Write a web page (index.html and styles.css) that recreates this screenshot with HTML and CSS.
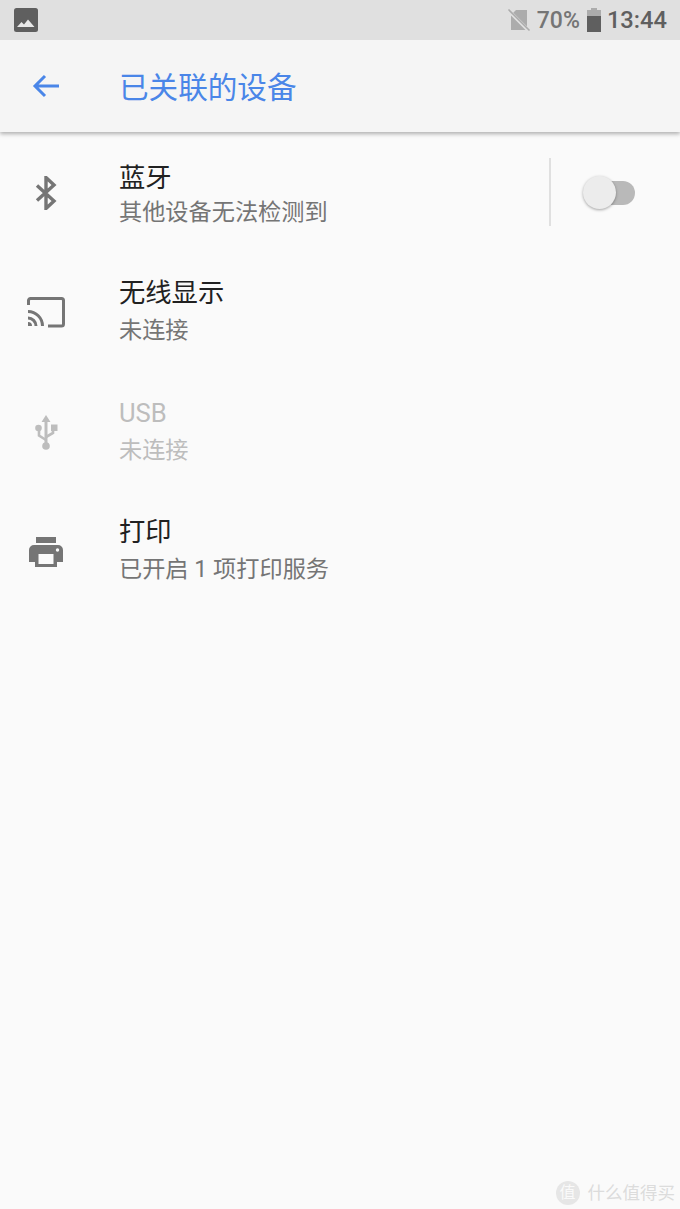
FILE: index.html
```html
<!DOCTYPE html>
<html lang="zh-CN">
<head>
<meta charset="utf-8">
<title>已关联的设备</title>
<link rel="stylesheet" href="styles.css">
</head>
<body>
<div class="screen">
  <header class="status">
    <svg class="pic" width="26" height="26" viewBox="0 0 26 26"><rect x="1" y="1" width="24" height="24" rx="2.5" fill="#5f5f5f"/><path d="M4 20l4.500-5 2.500 2.500 4-5 6.500 7.500z" fill="#e8e8e8"/></svg>
    <div class="status-right">
      <svg class="nosim" width="24" height="26" viewBox="0 0 24 26"><path d="M4 8l5-5h11v20H4z" fill="#acacac"/><path d="M1 3l21 21" stroke="#e0e0e0" stroke-width="3.500"/><path d="M1.500 2.500l21 21" stroke="#acacac" stroke-width="1.600"/></svg>
      <span class="pct">70%</span>
      <svg class="batt" width="16" height="24" viewBox="0 0 16 24"><path d="M5 0h6v2h4v6H1V2h4z" fill="#acacac"/><rect x="1" y="8" width="14" height="16" fill="#5f5f5f"/></svg>
      <span class="time">13:44</span>
    </div>
  </header>
  <div class="appbar">
    <svg class="back" width="30" height="26" viewBox="0 0 30 26"><path d="M28 13H5M14 3L4 13l10 10" fill="none" stroke="#4a86e8" stroke-width="3"/></svg>
    <h1 class="appbar-title">已关联的设备</h1>
  </div>
  <main class="list">
    <section class="row row-bt">
      <div class="icon">
        <svg width="24" height="34" viewBox="0 0 24 34"><path d="M3 9.500l17 15.500-8 7.500V1.500l8 7.500L3 24.500" fill="none" stroke="#757575" stroke-width="3.400"/></svg>
      </div>
      <div class="text">
        <div class="title">蓝牙</div>
        <div class="sub tight">其他设备无法检测到</div>
      </div>
      <div class="switch-box">
        <div class="switch"><span class="track"></span><span class="thumb"></span></div>
      </div>
    </section>
    <section class="row">
      <div class="icon">
        <svg width="38" height="32" viewBox="0 0 38 32"><path d="M1.500 8V3.500a2 2 0 0 1 2-2h31a2 2 0 0 1 2 2V27a2 2 0 0 1-2 2H21" fill="none" stroke="#757575" stroke-width="3"/><path d="M1 14.500A14.500 14.500 0 0 1 15.500 29M1 21a8 8 0 0 1 8 8" fill="none" stroke="#757575" stroke-width="3"/><path d="M1 25a4 4 0 0 1 4 4H1z" fill="#757575"/></svg>
      </div>
      <div class="text">
        <div class="title">无线显示</div>
        <div class="sub">未连接</div>
      </div>
    </section>
    <section class="row disabled">
      <div class="icon">
        <svg width="26" height="36" viewBox="0 0 26 36"><path d="M13 0l4.500 7h-3v21h-3V7h-3z" fill="#bdbdbd"/><circle cx="13" cy="31" r="3.800" fill="#bdbdbd"/><path d="M13 25l-7-4.500V15" fill="none" stroke="#bdbdbd" stroke-width="2.600"/><circle cx="5.500" cy="13" r="3.300" fill="#bdbdbd"/><path d="M13 22l7-4v-4" fill="none" stroke="#bdbdbd" stroke-width="2.600"/><rect x="18" y="9.500" width="6.500" height="6.500" fill="#bdbdbd"/></svg>
      </div>
      <div class="text">
        <div class="title">USB</div>
        <div class="sub">未连接</div>
      </div>
    </section>
    <section class="row">
      <div class="icon">
        <svg width="34" height="30" viewBox="0 0 34 30"><rect x="7" y="0" width="20" height="6" fill="#757575"/><path d="M5 8h24a5 5 0 0 1 5 5v12h-6v5H6v-5H0V13a5 5 0 0 1 5-5z" fill="#757575"/><rect x="9.500" y="17" width="15" height="10" fill="#fafafa"/><circle cx="28.500" cy="13" r="1.700" fill="#fafafa"/></svg>
      </div>
      <div class="text">
        <div class="title">打印</div>
        <div class="sub">已开启 1 项打印服务</div>
      </div>
    </section>
  </main>
  <div class="mark"><span class="mark-circle">值</span><span class="mark-text">什么值得买</span></div>
</div>
</body>
</html>
```
FILE: styles.css
```css
* { box-sizing: border-box; }
html, body { margin: 0; padding: 0; }
body {
  background: #fafafa;
  font-family: "Roboto", "Noto Sans CJK SC", sans-serif;
}
.screen { position: relative; width: 680px; height: 1209px; overflow: hidden; }
.status {
  position: relative;
  z-index: 1;
  height: 40px;
  background: #e0e0e0;
  display: flex;
  align-items: center;
  justify-content: space-between;
  padding: 0 13px;
}
.pic { display: block; margin-top: -1px; }
.status-right { display: flex; align-items: center; color: #5f5f5f; font-weight: 500; }
.nosim { margin-right: 6px; }
.pct { font-size: 23px; color: #757575; margin-right: 6px; }
.batt { margin-right: 5px; }
.time { font-size: 23.700px; }
.appbar {
  position: relative;
  height: 92px;
  background: #f5f5f5;
  display: flex;
  align-items: center;
  box-shadow: 0 2px 4px rgba(0, 0, 0, 0.3);
}
.back { margin-left: 31px; flex: none; }
.appbar-title {
  margin: 4px 0 0 58px;
  font-size: 29.600px;
  line-height: 40px;
  font-weight: 400;
  color: #4a86e8;
}
.list { display: flex; flex-direction: column; }
.row { display: flex; align-items: flex-start; height: 119.500px; }
.row-bt { height: 101px; }
.row .icon {
  width: 92px;
  height: 60px;
  margin-top: 50px;
  display: flex;
  align-items: center;
  justify-content: center;
  flex: none;
}
.row .text { margin-left: 27px; padding-top: 42px; }
.title { font-size: 26.300px; line-height: 36px; color: #212121; }
.sub { font-size: 23.200px; line-height: 32px; margin-top: 3px; color: #757575; }
.row-bt .icon { margin-top: 31px; }
.row-bt .text { padding-top: 28px; }
.row-bt .sub { margin-top: 0; }
.disabled .title { color: #bdbdbd; font-size: 25.600px; }
.disabled .sub { color: #bdbdbd; }
.switch-box {
  margin-left: auto;
  margin-top: 26px;
  width: 131px;
  height: 68px;
  border-left: 2px solid #e0e0e0;
  display: flex;
  align-items: center;
  padding: 2px 0 0 32px;
}
.switch { position: relative; width: 52px; height: 34px; display: flex; align-items: center; justify-content: flex-end; }
.track { display: block; width: 49px; height: 24px; border-radius: 12px; background: #b9b9b9; }
.thumb {
  position: absolute;
  left: 0;
  top: 0;
  width: 33px;
  height: 33px;
  border-radius: 50%;
  background: #ececec;
  box-shadow: 0 1px 3px rgba(0, 0, 0, 0.35);
}
.mark {
  position: absolute;
  right: 5px;
  bottom: 4px;
  display: flex;
  align-items: center;
  gap: 8px;
  color: #dcdcdc;
}
.mark-circle {
  width: 24px;
  height: 24px;
  border-radius: 50%;
  background: #e6e6e6;
  color: #fafafa;
  font-size: 16px;
  line-height: 24px;
  text-align: center;
}
.mark-text { font-size: 17.500px; line-height: 24px; }
```
